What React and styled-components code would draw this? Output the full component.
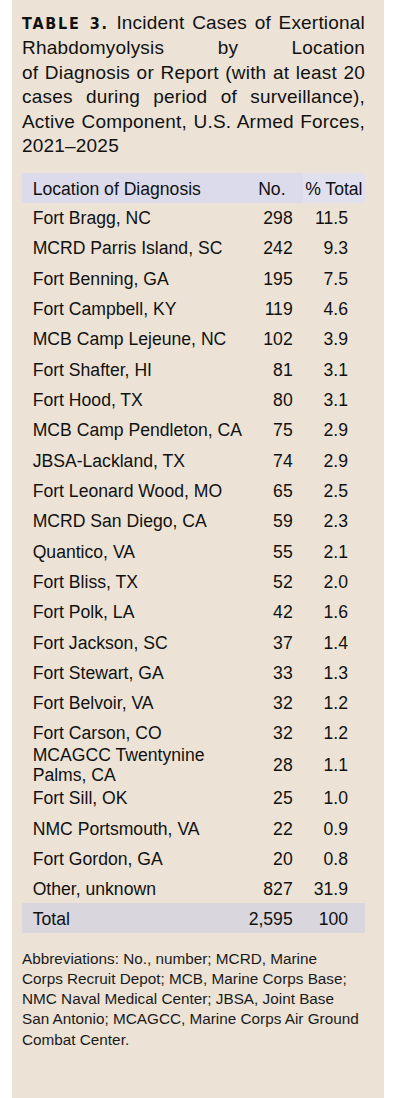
import styled, { createGlobalStyle } from "styled-components";

const GlobalStyle = createGlobalStyle`
    html, body {
        margin: 0;
        padding: 0;
        background: #ffffff;
    }
    body {
        font-family: "Liberation Sans", Arial, sans-serif;
        color: #111111;
    }
`;

const rows = [
    { loc: "Fort Bragg, NC", no: "298", pct: "11.5" },
    { loc: "MCRD Parris Island, SC", no: "242", pct: "9.3" },
    { loc: "Fort Benning, GA", no: "195", pct: "7.5" },
    { loc: "Fort Campbell, KY", no: "119", pct: "4.6" },
    { loc: "MCB Camp Lejeune, NC", no: "102", pct: "3.9" },
    { loc: "Fort Shafter, HI", no: "81", pct: "3.1" },
    { loc: "Fort Hood, TX", no: "80", pct: "3.1" },
    { loc: "MCB Camp Pendleton, CA", no: "75", pct: "2.9" },
    { loc: "JBSA-Lackland, TX", no: "74", pct: "2.9" },
    { loc: "Fort Leonard Wood, MO", no: "65", pct: "2.5" },
    { loc: "MCRD San Diego, CA", no: "59", pct: "2.3" },
    { loc: "Quantico, VA", no: "55", pct: "2.1" },
    { loc: "Fort Bliss, TX", no: "52", pct: "2.0" },
    { loc: "Fort Polk, LA", no: "42", pct: "1.6" },
    { loc: "Fort Jackson, SC", no: "37", pct: "1.4" },
    { loc: "Fort Stewart, GA", no: "33", pct: "1.3" },
    { loc: "Fort Belvoir, VA", no: "32", pct: "1.2" },
    { loc: "Fort Carson, CO", no: "32", pct: "1.2", pb: 1 },
    { loc: "MCAGCC Twentynine Palms, CA", no: "28", pct: "1.1", pt: 1, pb: 1, wrap: true },
    { loc: "Fort Sill, OK", no: "25", pct: "1.0", pt: 2 },
    { loc: "NMC Portsmouth, VA", no: "22", pct: "0.9" },
    { loc: "Fort Gordon, GA", no: "20", pct: "0.8" },
    { loc: "Other, unknown", no: "827", pct: "31.9", pb: 3.5 },
];

function App() {
    return (
        <>
            <GlobalStyle />
            <Panel>
                <Title>
                    <Label>TABLE 3.</Label> Incident Cases of Exertional
                    Rhabdomyolysis by Location of&nbsp;Diagnosis or Report (with at
                    least 20 cases during period of surveillance), Active
                    Component, U.S. Armed Forces, 2021–2025
                </Title>
                <Table>
                    <colgroup>
                        <col style={{ width: 219 }} />
                        <col style={{ width: 61.7 }} />
                        <col style={{ width: 62.3 }} />
                    </colgroup>
                    <thead>
                        <HeadRow>
                            <HeadCell>Location of Diagnosis</HeadCell>
                            <HeadCell $align="center">No.</HeadCell>
                            <HeadCell $align="center" $light>% Total</HeadCell>
                        </HeadRow>
                    </thead>
                    <tbody>
                        {rows.map((r) => (
                            <tr key={r.loc}>
                                <LocCell $pt={r.pt} $pb={r.pb} $wrap={r.wrap}>{r.loc}</LocCell>
                                <NumCell $pt={r.pt} $pb={r.pb}>{r.no}</NumCell>
                                <PctCell $pt={r.pt} $pb={r.pb}>{r.pct}</PctCell>
                            </tr>
                        ))}
                        <TotalRow>
                            <LocCell $pt={6.2} $pb={3.8}>Total</LocCell>
                            <NumCell $pt={6.2} $pb={3.8}>2,595</NumCell>
                            <PctCell $pt={6.2} $pb={3.8}>100</PctCell>
                        </TotalRow>
                    </tbody>
                </Table>
                <Notes>
                    Abbreviations: No., number; MCRD, Marine<br />
                    Corps Recruit Depot; MCB, Marine Corps Base; NMC Naval Medical
                    Center; JBSA, Joint Base San Antonio; MCAGCC, Marine Corps Air
                    Ground Combat Center.
                </Notes>
            </Panel>
        </>
    );
}

const Panel = styled.div`
    box-sizing: border-box;
    width: 372px;
    min-height: 1098px;
    margin-left: 12px;
    padding: 10.5px 19px 0 10px;
    background-color: #ece3d6;
`;

const Title = styled.p`
    margin: 0;
    font-size: 19px;
    line-height: 24.5px;
    letter-spacing: 0.2px;
    text-align: justify;
    color: #111111;
`;

const Label = styled.span`
    font-family: "DejaVu Sans Condensed", "DejaVu Sans", sans-serif;
    font-stretch: condensed;
    font-weight: bold;
    font-size: 16px;
    letter-spacing: 1.8px;
`;

const Table = styled.table`
    width: 343px;
    margin-top: 14.5px;
    table-layout: fixed;
    border-collapse: collapse;
    border-spacing: 0;
    font-size: 17.6px;
    line-height: 20px;
    color: #111111;
`;

const HeadRow = styled.tr`
    background-color: #dcdbeb;
`;

const HeadCell = styled.th`
    padding: 6.3px 0 3.7px;
    padding-left: ${(p) => (p.$align === "center" ? "0" : "10.7px")};
    text-align: ${(p) => p.$align || "left"};
    font-weight: normal;
    white-space: nowrap;
    background-color: ${(p) => (p.$light ? "#e0e0ee" : "transparent")};
`;

const Cell = styled.td`
    padding-top: ${(p) => (p.$pt ?? 5.17)}px;
    padding-bottom: ${(p) => (p.$pb ?? 5.17)}px;
    vertical-align: middle;
`;

const LocCell = styled(Cell)`
    padding-left: 10.7px;
    padding-right: 2px;
    text-align: left;
    white-space: ${(p) => (p.$wrap ? "normal" : "nowrap")};
`;

const NumCell = styled(Cell)`
    padding-right: 10px;
    text-align: right;
`;

const PctCell = styled(Cell)`
    padding-right: 17px;
    text-align: right;
`;

const TotalRow = styled.tr`
    background-color: #d9d6dd;
`;

const Notes = styled.p`
    margin: 16px 0 0;
    font-size: 15.3px;
    line-height: 20.2px;
    color: #1a1a1a;
`;

export default App;
